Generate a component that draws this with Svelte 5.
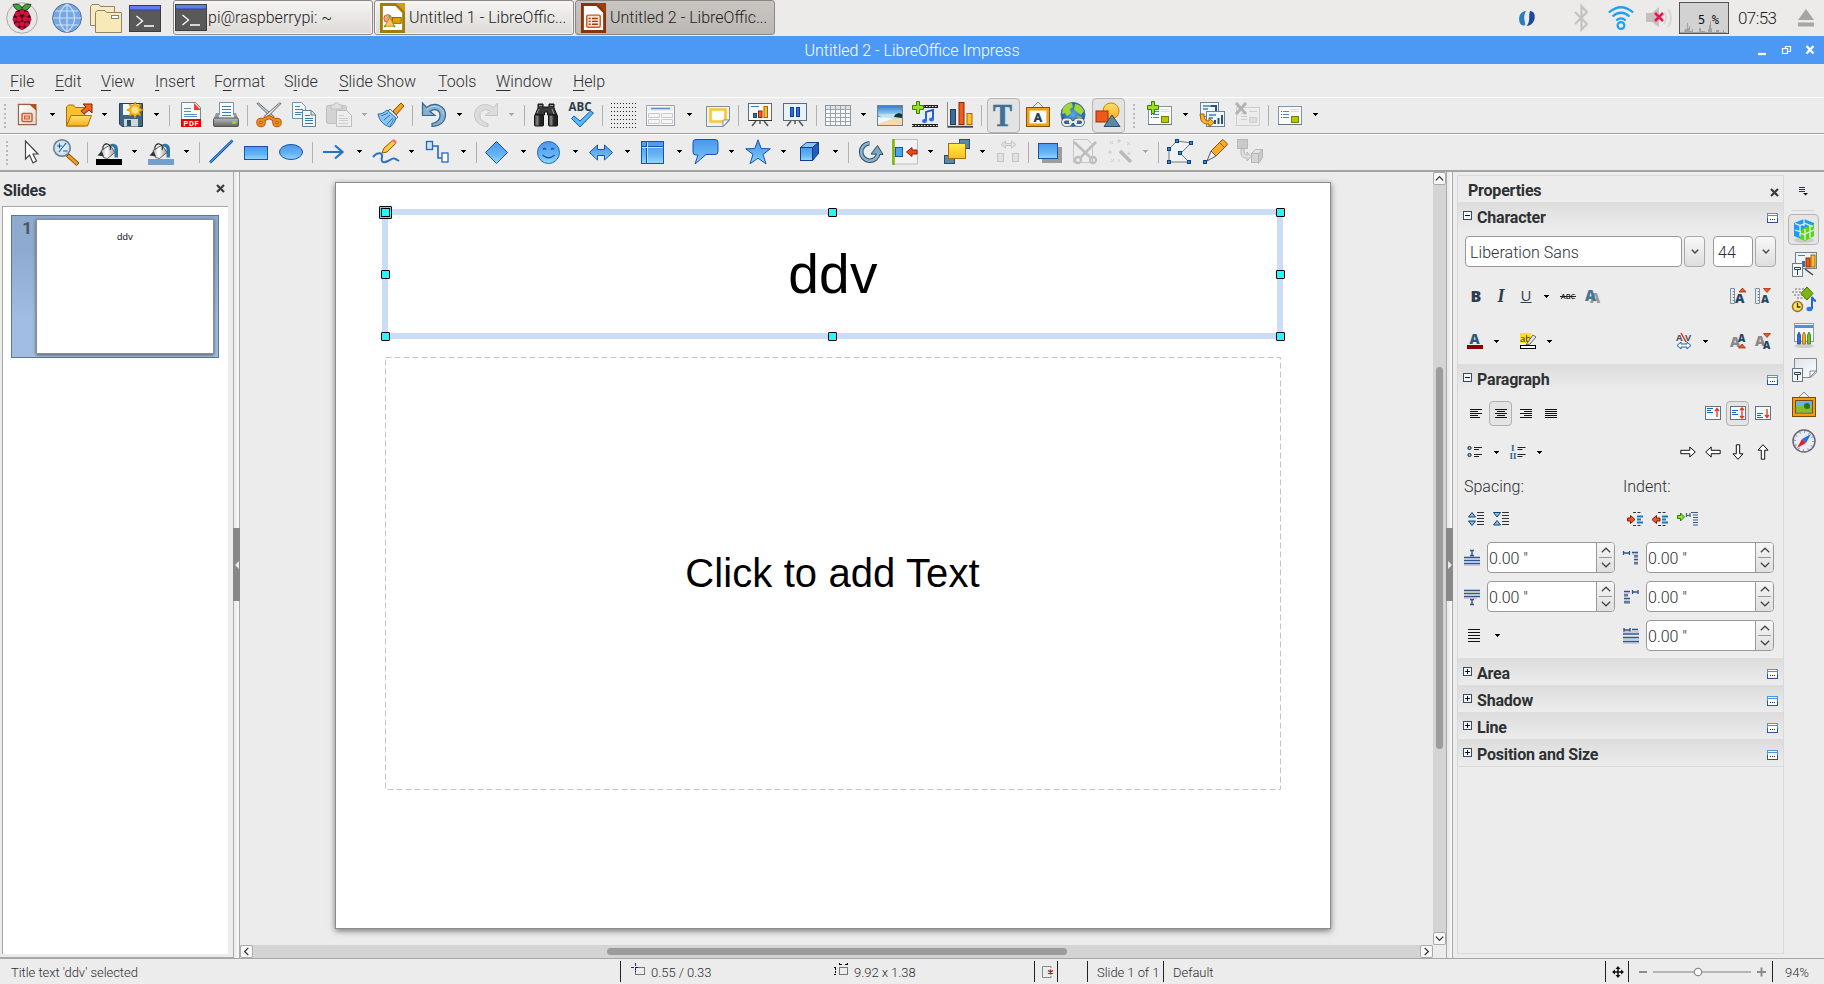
<script>
  const menus = [
    ['', 'F', 'ile', 45], ['', 'E', 'dit', 46], ['', 'V', 'iew', 54], ['', 'I', 'nsert', 59], ['F', 'o', 'rmat', 70],
    ['S', 'l', 'ide', 55], ['', 'S', 'lide Show', 99], ['', 'T', 'ools', 58], ['', 'W', 'indow', 77], ['', 'H', 'elp', 50]
  ];

  const star = 'M13 .8L16.2 9.6 25.3 9.8 18 15.4 21 24.8 13 19.2 5 24.8 8 15.4 .7 9.8 9.8 9.6Z';
  const dots = (() => {
    let s = '';
    for (let y = 0; y < 26; y += 4) for (let x = 1; x < 27; x += 3) s += `<rect x="${x - 1}" y="${y + 1}" width="1" height="1"/>`;
    return `<g fill="#222">${s}</g>`;
  })();
  const bucket = (c) => `<path d="M14 5.500c4-2 8 0 8 5v8h-3.500v-7c0-3-1-4-3-4z" fill="#2c76a8"/><path d="M5 11.500L14 6l5 7.500-7.500 6-4-1z" fill="url(#metal)" stroke="#555" stroke-width=".9"/><path d="M7 10.500c-1-4 2-6 4.500-5.500 3 .6 3.500 4 2.500 6" fill="none" stroke="#222" stroke-width="1.100"/><path d="M1.500 16.500l4-4.500 2.500 5.500-3-.5z" fill="#333"/><rect x="0" y="20" width="26" height="6" fill="${c}"/>`;
  const legs = '<path d="M9 19l-4 5M17 19l4 5M13 18v4" stroke="#555" stroke-width="1.500" fill="none"/>';
  const layoutPage = '<rect x="1.500" y="4.500" width="23" height="18" fill="#f8fafb" stroke="#8594a0"/><path d="M1 22.500h24" stroke="#667480"/><path d="M6 9.500h6M6 12.500h6M6 15.500h6" stroke="#4b88bd" stroke-width="1"/><path d="M4 9.500h1M4 12.500h1M4 15.500h1" stroke="#245c90"/><path d="M14 7.500h8M14 9.500h8" stroke="#d5dde3"/><rect x="14.500" y="14.500" width="7" height="6" fill="#b5c900" stroke="#718300"/>';
  const chartBars = '<rect x="6.500" y="11.500" width="3" height="4" fill="#3f6e93" stroke="#224763"/><rect x="11.500" y="9" width="3.500" height="6.500" fill="#f15b12" stroke="#932404"/><rect x="17" y="4.500" width="3.500" height="11" fill="#ffc02a" stroke="#a66300"/>';

  const ic = {
    impress: '<path d="M4.500 2.500h12l5.500 5v15h-17.500z" fill="#fff" stroke="#9b6247" stroke-width="1.300"/><path d="M5.500 3.500h11l5 5v13.500h-16z" fill="url(#docshade)"/><path d="M15 2h7.500v7z" fill="#b84d1e"/><rect x="8" y="11.500" width="10" height="8" rx="1" fill="#fbe3d5" stroke="#d3582a" stroke-width="1.500"/><rect x="10.500" y="14" width="5" height="3" fill="#f0b692" stroke="#d3582a"/>',
    open: '<path d="M.5 24V5l2-2h5l2 2.500h9V24z" fill="#fbc02d" stroke="#a96f06"/><path d="M.5 24L5 13.500h20.500L21.500 24z" fill="url(#gold)" stroke="#a96f06"/><path d="M15 9l5-4-3-3h9v9l-3-3-5 4z" fill="#f0641e" stroke="#7d2204"/>',
    save: '<path d="M1.500 1.500h23v23H4l-2.500-2.500z" fill="#3e6582" stroke="#233d52"/><rect x="5" y="2" width="16" height="11" fill="#f2f7fa"/><rect x="6" y="17" width="14" height="7.500" fill="#cdd8de"/><rect x="9" y="18" width="4" height="6" fill="#2c4c64"/><path d="M17 0l1.800 3.700 4-1.600-1.500 4 4 1.800-4 1.800 1.500 4-4-1.500L17 16l-1.800-3.800-4 1.500 1.500-4-4-1.800 4-1.800-1.500-4 4 1.600z" fill="#ffb81c" stroke="#d98500" stroke-width=".8"/><circle cx="17" cy="8" r="3.500" fill="#ffe680"/>',
    pdf: '<path d="M3.500.5h14l5 5v19h-19z" fill="#f4f8fa" stroke="#7a8a96"/><path d="M16 1l7 7h-7z" fill="#ff3b30"/><path d="M6 6.500h7M6 9.500h7M6 12.500h13M6 14.500h13" stroke="#5a90b8"/><rect x="3" y="17" width="20" height="8" fill="#e00"/><text x="13.300" y="23.700" font-size="7.500" font-weight="700" fill="#fff" text-anchor="middle" font-family="Roboto,sans-serif" letter-spacing=".6">PDF</text>',
    print: '<path d="M6.500 13V.5h14V13" fill="#f7fbfd" stroke="#7894a8"/><path d="M9 4.500h9M9 7.500h9M9 10.500h9M9 13.500h9" stroke="#447ea8"/><path d="M3 11h3v5h15v-5h2l2 5H1z" fill="#999"/><rect x=".5" y="16" width="25" height="8.500" rx="1.500" fill="url(#printer)" stroke="#555"/><ellipse cx="21" cy="20.500" rx="2" ry="1.200" fill="#8bef1b"/>',
    cut: '<path d="M1 1.500l15 15 2-2L2.500 1z" fill="#d4dae0" stroke="#59636b"/><path d="M25 1.500l-15 15-2-2L23.500 1z" fill="#e9edf0" stroke="#59636b"/><g fill="none" stroke="#a94c06" stroke-width="4"><circle cx="5" cy="20.500" r="2.800"/><circle cx="21" cy="20.500" r="2.800"/><path d="M7 18l6-3 6 3"/></g><g fill="none" stroke="#f58a1c" stroke-width="2.300"><circle cx="5" cy="20.500" r="2.800"/><circle cx="21" cy="20.500" r="2.800"/><path d="M7 18l6-3 6 3"/></g>',
    copy: '<path d="M1.500.5h9l4 4v12h-13z" fill="#f2f7fa" stroke="#78909f"/><path d="M4 4.500h5M4 7.500h8M4 10.500h8M4 12.500h6" stroke="#4583b0"/><path d="M11.500 8.500h9l4 4v12h-13z" fill="#f2f7fa" stroke="#667d8d"/><path d="M20 8.500v4.500h4.500" fill="#d3e0e8" stroke="#667d8d"/><path d="M14 13.500h5M14 16.500h8M14 18.500h8M14 21.500h8" stroke="#3b79a8"/>',
    paste: '<g stroke="#bdbdbd"><rect x=".5" y="3.500" width="20" height="18" rx="2" fill="#d3d3d3"/><path d="M5 7V3h3c0-3 5-3 5 0h3v4z" fill="#e0e0e0"/><path d="M10.500 8.500h10l5 5v11h-15z" fill="#ededed"/><path d="M13 13.500h5M13 16.500h9M13 18.500h9M13 21.500h9" stroke="#ccc"/></g>',
    brush: '<path d="M15 9l8-8 3 3-8 9z" fill="#f0a51e" stroke="#8a4b00"/><path d="M12 7l8 8-2 2-9-7z" fill="#e0e6ea" stroke="#5a6a75"/><path d="M9 8c-3 3-6 4-9 4 1 6 5 11 12 13 3-2 5-5 6-9z" fill="#8cc4f2" stroke="#2c69a6"/><path d="M3 14l7-3M6 18l6-5M9 22l6-6M12 24l4-7" stroke="#2f7cc4"/>',
    undo: '<path d="M1.500 1v12.500h12.500l-5-4c5-4 10-1 10 4 0 4-3 7-8 8v3c7 0 13-4 13.500-11C25 4 14-1 5.500 5.500z" fill="#86afcf" stroke="#34668f" stroke-width="1.200"/><path d="M5.500 7.500c7-6 16-3 17 5" stroke="#bcd6ea" fill="none"/>',
    redo: '<path transform="matrix(-1 0 0 1 26 0)" d="M1.500 1v12.500h12.500l-5-4c5-4 10-1 10 4 0 4-3 7-8 8v3c7 0 13-4 13.500-11C25 4 14-1 5.500 5.500z" fill="#dcdcdc" stroke="#c6c6c6"/>',
    find: '<path d="M5 2h5v3h6V2h5v4l3 7h-9.500v-3h-3v3H2l3-7z" fill="#3a3a3a" stroke="#111"/><rect x="1.500" y="13" width="9" height="11" rx="1" fill="url(#black)" stroke="#111"/><rect x="15.500" y="13" width="9" height="11" rx="1" fill="url(#black)" stroke="#111"/><path d="M6 3.500h3M17 3.500h3M4 11l2-4M19 7l2 5" stroke="#999"/>',
    abc: '<text x="12" y="8.500" font-family="Open Sans,sans-serif" font-weight="700" font-size="11.500" text-anchor="middle" fill="#2a3d4d">ABC</text><path d="M3.500 16.500L6 14l6 5L22.500 9l3 2L12 25z" fill="#55b8f8" stroke="#1a5ba8"/>',
    grid: dots,
    table: '<rect x=".5" y="3.500" width="25" height="20" fill="#f7f8fa" stroke="#8e979f"/><path d="M1 4h24v3H1z" fill="#dfe3e7"/><path d="M1 7.500h24M1 11.500h24M1 15.500h24M1 19.500h24M5.500 4v19M10.500 4v19M15.500 4v19M20.500 4v19" stroke="#9aa3ab"/>',
    frame: '<path d="M-1.500 3.500h28v20h-28z" fill="#fbfbfc" stroke="#9aa3ab"/><path d="M0 5h25v4H0z" fill="#e6ebf2"/><path d="M3 6.500h19" stroke="#5c8fc7" stroke-width="1.500"/><path d="M.5 11.500h11v4h-11zM13.500 11.500h11v4h-11zM.5 17.500h11v4h-11zM13.500 17.500h11v4h-11z" fill="#f5f5f5" stroke="#c9c9c9"/>',
    note: '<path d="M2.500 4.500h23v14l-6 6h-17z" fill="#eef1f3" stroke="#828e98"/><path d="M6.500 7.500h15v12h-15z" fill="#fff" stroke="#ffc62c" stroke-width="2.600"/><path d="M25 18h-6v6.500z" fill="#fff" stroke="#828e98"/>',
    show: '<rect x="1.500" y="1.500" width="23" height="17" fill="#f5f9fc" stroke="#5c6b77"/><path d="M2 18.500h23" stroke="#333"/><path d="M4 4.500h8" stroke="#3c82c8"/>' + chartBars + legs,
    pause: '<rect x="1.500" y="1.500" width="23" height="17" fill="#e8f2fa" stroke="#5c6b77"/><rect x="8.500" y="5.500" width="3" height="9" fill="#2a71dd" stroke="#123e94"/><rect x="14.500" y="5.500" width="3" height="9" fill="#2a71dd" stroke="#123e94"/>' + legs,
    image: '<rect x=".5" y="3.500" width="25" height="20" fill="#5ea9dd" stroke="#72838d"/><path d="M1 4h24v9H1z" fill="url(#sky)"/><path d="M1 13c8-2 14 0 24-1v5L9 18z" fill="#bfe2f0"/><path d="M1 17h24v6H1z" fill="#f5d9aa"/><path d="M1 15c7 1 13 0 14 2L1 22z" fill="#eef8fc"/><path d="M17 15c1-3 2-3 5-4l3 1v4z" fill="#17352d"/>',
    movie: '<path d="M4 5h22v18H4z" fill="#e8edf2"/><path d="M0 23.500h26M11 4.500h15" stroke="#222" stroke-width="3"/><path d="M0 23.500h26M11 4.500h15" stroke="#eee" stroke-width="1.200" stroke-dasharray="1.500 1.500"/><path d="M14 19V10l7-2v9" fill="none" stroke="#184fd0" stroke-width="1.800"/><ellipse cx="12.500" cy="19" rx="2.500" ry="2" fill="#2a6ff0"/><ellipse cx="19.500" cy="17.500" rx="2.500" ry="2" fill="#2a6ff0"/><path d="M4.500-.5h3v4h4v4h-4v4h-3v-4h-4v-4h4z" fill="#9be028" stroke="#3c7d00"/>',
    chart: '<path d="M.5 0v25.500h25.500" fill="none" stroke="#888"/><path d="M1 24.500h25" stroke="#444" stroke-width="1.300"/><rect x="3.500" y="7.500" width="5" height="15" fill="#3d6c90" stroke="#1e3f5a"/><rect x="12" y=".5" width="5" height="22" fill="#f25c16" stroke="#8a2606"/><rect x="20" y="11.500" width="5" height="11" fill="#ffc22c" stroke="#a66900"/>',
    text: '<text x="12.500" y="23.500" text-anchor="middle" font-family="Liberation Serif,serif" font-weight="700" font-size="31" textLength="19" lengthAdjust="spacingAndGlyphs" fill="#3e7196" stroke="#3e7196" stroke-width=".6">T</text>',
    fontwork: '<path d="M8 5l5-5 5 5" fill="none" stroke="#888"/><rect x="1.500" y="5.500" width="23" height="19" fill="#fff" stroke="#8a5200"/><rect x="3.300" y="7.300" width="19.400" height="15.400" fill="#fff" stroke="#f0a11c" stroke-width="2.600"/><text x="13" y="20" text-anchor="middle" font-family="Roboto,sans-serif" font-weight="900" font-size="13" fill="#1f3f5c">A</text>',
    globe: '<circle cx="13" cy="12.500" r="12" fill="url(#sea)" stroke="#4076a8"/><path d="M3 6c3-4 6-5 9-5l1 4-3 2 1 4-4 3-2-3-3 1zM15 2c4 0 7 3 9 7l-3 4-4-3-3-2zM17 14l5 1-3 4z" fill="#a3d632"/><g fill="none" stroke="#4b5660" stroke-width="3.600"><rect x="3" y="17.500" width="8" height="5.500" rx="2.700"/><rect x="15" y="17.500" width="8" height="5.500" rx="2.700"/><path d="M9 20h8"/></g><g fill="none" stroke="#e9eef2" stroke-width="1.900"><rect x="3" y="17.500" width="8" height="5.500" rx="2.700"/><rect x="15" y="17.500" width="8" height="5.500" rx="2.700"/><path d="M9 20h8"/></g>',
    shapes: '<circle cx="16" cy="9" r="8" fill="url(#gold)" stroke="#c98500"/><rect x="1" y="9" width="12" height="11" fill="#ec5a1c" stroke="#a32e04"/><path d="M17 13l8 11.500H9z" fill="#5b87a8" stroke="#2a4d69"/>',
    addslide: layoutPage + '<path d="M4.500-.5h3v4h4v4h-4v4h-3v-4h-4v-4h4z" fill="#9be028" stroke="#3c7d00"/>',
    dup: '<rect x="1.500" y=".5" width="18" height="14" fill="#f2f7fb" stroke="#6d8194"/><path d="M4 4h8M4 7h5" stroke="#3d83be" stroke-width="1.300"/><path d="M12 4h5v5" stroke="#27547c" stroke-width="2" fill="none"/><rect x="7.500" y="9.500" width="18" height="15" fill="#f2f7fb" stroke="#6d8194"/><path d="M10 13h7M10 16h4" stroke="#3d83be" stroke-width="1.300"/><path d="M16 22v-4M19.500 22v-6M23 22v-9" stroke="#27547c" stroke-width="2"/><path d="M1 12l1 6c2 4 5 4 8 4v3l5-4.500-5-4.500v3c-3 0-5-1-5-7z" fill="#ffb42a" stroke="#9b5a00"/>',
    del: '<g stroke="#cfcfcf"><rect x="2.500" y="5.500" width="23" height="18" fill="#ececec"/><path d="M7 11.500h6M7 14.500h6M7 17.500h6M15 9.500h8"/><rect x="15.500" y="15.500" width="7" height="5" fill="#ddd"/></g><path d="M2 1l10 11M12 1L2 12" stroke="#b3b3b3" stroke-width="3"/>',
    layout: layoutPage,
    pointer: '<path d="M7.500 2v18l4-4 3.500 8 3.500-2-3.500-7h5z" fill="#fff" stroke="#444" stroke-width="1.200"/>',
    zoom: '<path d="M16 15l10 9-2.500 2.500-10-9z" fill="#f19a1c" stroke="#7d4800"/><circle cx="9" cy="9" r="8.300" fill="url(#lens)" stroke="#717b84" stroke-width="1.500"/><path d="M4 7h5M6.500 4.500v5M10 12h4.500M6 13L13 4" stroke="#1d5d9b" stroke-width="1.200"/>',
    fill: bucket('#000'), linefill: bucket('#729fcf'),
    line: '<path d="M2 23.500L24.500 1.500" stroke="#104a9a" stroke-width="2.600"/><path d="M2 23.500L24.500 1.500" stroke="#3c8ee8" stroke-width="1.300"/>',
    rect: '<rect x="1.500" y="7.500" width="23" height="13" fill="url(#blue)" stroke="#1752ab"/>',
    ellipse: '<ellipse cx="13" cy="13" rx="11.500" ry="7.500" fill="url(#blue)" stroke="#1752ab"/>',
    arrow: '<path d="M2 13h18M14 6.500l7.500 6.500-7.500 6.500" fill="none" stroke="#2270cf" stroke-width="2.200"/>',
    curve: '<path d="M0 18c5-6 10-4 9 0s0 7 6 4 5-4 11 0" fill="none" stroke="#2b74c4" stroke-width="2"/><path d="M9 14l2-5 9-8 3 3-9 9z" fill="#ffca3a" stroke="#8d5b00"/><path d="M19 1.500l2-1.500 3 3-1.500 2z" fill="#ff6c7c"/>',
    connector: '<rect x="1.500" y="2.500" width="6" height="8" fill="#cfe4fb" stroke="#2468b8" stroke-width="1.300"/><path d="M8 7h5v12h4" fill="none" stroke="#2468b8" stroke-width="1.600"/><rect x="17" y="14" width="6" height="9" fill="#fff" stroke="#2468b8" stroke-width="1.300"/>',
    diamond: '<path d="M11.500 2.500L22.500 13.500 11.500 24.500.5 13.500z" fill="url(#blue)" stroke="#1752ab"/>',
    smile: '<circle cx="11.500" cy="13.500" r="11" fill="url(#blue)" stroke="#2466b8"/><path d="M6 10.500q1.500-2 3 0M14 10.500q1.500-2 3 0M5.500 16q6 5.500 12 0" stroke="#1752ab" stroke-width="1.300" fill="none"/>',
    dblarrow: '<path d="M.5 13.500l8-7.500v4.500h7V6l8 7.500-8 7.500v-4.500h-7V21z" fill="url(#blue)" stroke="#1752ab"/>',
    flow: '<rect x=".5" y="2.500" width="22" height="22" fill="url(#blue)" stroke="#1752ab"/><path d="M5.500 2v22M0 7.500h22" stroke="#1752ab"/><path d="M6.500 3v21M1 8.500h21" stroke="#bfe0fa"/>',
    callout: '<path d="M3 .5h19q3 0 3 3v9q0 3-3 3h-9L2 25l3-9H3q-3 0-3-3v-9.500q0-3 3-3z" fill="url(#blue)" stroke="#1752ab"/>',
    star: `<path d="${star}" fill="url(#blue)" stroke="#1752ab"/>`,
    cube: '<path d="M3.500 8.500l6-5h12l-6 5z" fill="#8cc6f8" stroke="#113f8c"/><path d="M15.500 8.500l6-5v11l-6 7z" fill="#1c5fc0" stroke="#113f8c"/><rect x="3.500" y="8.500" width="12" height="13" fill="url(#blue)" stroke="#113f8c"/>',
    rotate: '<path d="M12.500 4.300a8.700 8.700 0 1 0 9 9.700" fill="none" stroke="#274d6b" stroke-width="4.600"/><path d="M14 15l6.500-8.500 5.500 9z" fill="#7fa5c2" stroke="#274d6b"/><path d="M12.500 4.300a8.700 8.700 0 1 0 9 9.700" fill="none" stroke="#8fb2cc" stroke-width="2.600"/>',
    align: '<path d="M.5.500h25v24.500h-25z" fill="#f2f2f4" stroke="#b9bcc6"/><path d="M1.500 0v26" stroke="#7cb800" stroke-width="2.500"/><rect x="3.500" y="8.500" width="7" height="9" fill="#4aa5ee" stroke="#1857a2"/><path d="M14.500 13l5.500-4.500v2.500h5v4H20v2.500z" fill="#f04a1c" stroke="#8b1e00"/>',
    arrange: '<rect x="15.500" y=".5" width="10" height="9" fill="#5c88a8" stroke="#2b4b63"/><rect x=".5" y="16.500" width="10" height="8" fill="#5c88a8" stroke="#2b4b63"/><rect x="4.500" y="4.500" width="17" height="15" fill="url(#yellow)" stroke="#a86c00"/>',
    distribute: '<g fill="#e1e1e1" stroke="#c5c5c5"><path d="M6 5.500l4.500-3.500v2.500h6V2l4.500 3.500-4.500 3.500V6.500h-6V9z"/><rect x="2.500" y="14.500" width="6" height="8"/><rect x="17.500" y="14.500" width="6" height="8"/></g>',
    shadow: '<path d="M5 8h20v16H5z" fill="#9c9c9c"/><rect x="1.500" y="4.500" width="19" height="15" fill="url(#blue)" stroke="#1752ab"/>',
    crop: '<path d="M1.500.5h14l5 5v18h-19z" fill="#ededed" stroke="#c5c5c5"/><path d="M2 3l16 15M24 3L9 18" stroke="#bdbdbd" stroke-width="2.600"/><g fill="none" stroke="#bdbdbd" stroke-width="2.300"><circle cx="6" cy="21" r="3"/><circle cx="21" cy="21" r="3"/></g>',
    wand: '<path d="M13 12l11 11" stroke="#bababa" stroke-width="3.500"/><g stroke="#cbcbcb"><path d="M3 2l3 3M6 2L3 5M12 0v4M10 2h4M20 3l3 3M23 3l-3 3M3 11v4M1 13h4M22 13v3M20.500 14.500h3M4 20l3 3M7 20l-3 3M12 20v3"/></g>',
    points: '<path d="M2 23h20L13.500 14.500 24 4 10 2 2 10z" fill="#f0f3f5" stroke="#777"/><g fill="#2d8ae0" stroke="#0d3f7c"><rect x="8.500" y=".5" width="3" height="3"/><rect x="22.500" y="2.500" width="3" height="3"/><rect x=".5" y="8.500" width="3" height="3"/><rect x="11.500" y="12.500" width="3" height="3"/><rect x=".5" y="21.500" width="3" height="3"/><rect x="20.500" y="21.500" width="3" height="3"/></g>',
    glue: '<path d="M9 12L19 2l2-1.500L25.500 5 24 7 14 17z" fill="#f8ac28" stroke="#8b5200"/><path d="M9 12l5 5-9 5z" fill="#eceff2" stroke="#555"/><path d="M17 3l6 6" stroke="#8b5200"/><rect x="1.500" y="21.500" width="3" height="3" fill="#2d8ae0" stroke="#0d3f7c"/>',
    extrude: '<g fill="#cacaca" stroke="#b8b8b8"><rect x=".5" y=".5" width="10" height="9"/><path d="M4 10v5c1 4 4 4 6 4v3l4-4.500-4-4.500v3c-2 0-3-1-3-6z" fill="#e0e0e0"/><path d="M14.500 14.500l4-4h7l-4 4z" fill="#e2e2e2"/><path d="M21.500 14.500l4-4v8l-4 6z"/><rect x="14.500" y="14.500" width="7" height="9" fill="#d5d5d5"/></g>'
  };

  const bar1 = ['g10', 'impress', 'd', 'open', 'd', 'save', 'd', '|', 'pdf', 'print', '|', 'cut', 'copy', 'paste', 'x', 'brush', '|', 'undo', 'd', 'redo', 'x', '|', 'find', 'abc', '|', 'grid', 'frame', 'D', 'note', '|', 'show', 'pause', '|', 'table', 'd', 'image', 'movie', 'chart', '|', '*text', 'fontwork', 'globe', '*shapes', 'g17', 'addslide', 'd', 'dup', 'del', '|', 'layout', 'd'];
  const bar2 = ['g13', 'pointer', 'zoom', '|', 'fill', 'd', 'linefill', 'd', '|', 'line', 'rect', 'ellipse', '|', 'arrow', 'd', 'curve', 'd', 'connector', 'd', '|', 'diamond', 'd', 'smile', 'd', 'dblarrow', 'd', 'flow', 'd', 'callout', 'd', 'star', 'd', 'cube', 'd', '|', 'rotate', 'align', 'd', 'arrange', 'd', 'distribute', '|', 'shadow', 'crop', 'wand', 'x', '|', 'points', 'glue', 'extrude'];

  /* 16px sidebar glyphs */
  const A = (x, y, s, c) => `<text x="${x}" y="${y}" font-family="Open Sans,sans-serif" font-weight="800" font-size="${s}" fill="${c}">A</text>`;
  const up = (x, y) => `<path d="M${x} ${y + 4}l3.500-4 3.500 4z" fill="#f4571e" stroke="#8f2200" stroke-width=".7"/>`;
  const dn = (x, y) => `<path d="M${x} ${y}h7l-3.500 4z" fill="#f4571e" stroke="#8f2200" stroke-width=".7"/>`;
  const rule = '<path d="M.5.5h4v15h-4zM2.500 3.500h2M2.500 6.500h2M2.500 9.500h2M2.500 12.500h2" fill="#e6edf2" stroke="#71879a" stroke-width=".9"/>';
  const lines = (a) => '<path stroke="#111" stroke-width="1" d="' + a.map(([x, w], i) => `M${x} ${4.5 + i * 2}h${w}`).join('') + '"/>';
  const va = (t, arr) => `<rect x=".5" y="1.500" width="15" height="13" fill="#f7fafc" stroke="#5e7388"/>${t}<path d="${arr}" stroke="#e8330f" stroke-width="1.300" fill="none"/>`;
  const bl = (x, y, w) => `<path d="M${x} ${y}h${w}M${x} ${y + 2}h${w - 2}M${x} ${y + 4}h${w}" stroke="#1b66b4" stroke-width="1"/>`;
  const outArrow = '<path d="M.8 6.300h9V3l5.500 5-5.500 5V9.700h-9z" fill="#fff" stroke="#111"';
  const sg = {
    bold: '<text x="8" y="14" text-anchor="middle" font-family="Open Sans,sans-serif" font-weight="800" font-size="16" fill="#2b3e50">B</text>',
    italic: '<text x="8" y="14" text-anchor="middle" font-family="Liberation Serif,serif" font-style="italic" font-weight="700" font-size="18" fill="#2b3e50">I</text>',
    under: '<text x="8" y="12.500" text-anchor="middle" font-family="Open Sans,sans-serif" font-weight="500" font-size="15" fill="#2b3e50">U</text><path d="M2.500 14.500h11" stroke="#2b3e50"/>',
    strike: '<text x="8" y="11" text-anchor="middle" font-family="Open Sans,sans-serif" font-weight="600" font-size="7.500" fill="#222">ABC</text><path d="M0 8.500h16" stroke="#222"/>',
    shade: A(5, 15, 14, '#9a9a9a') + A(0, 13, 15, '#457499'),
    grow: rule + A(5, 15, 13, '#27465f') + up(9, 0), shrink: rule + A(6, 15, 11, '#27465f') + dn(8.5, 0.5),
    color: A(2.5, 10.5, 14, '#2f5878') + '<rect y="12" width="16" height="4" fill="#8b0000"/>',
    mark: '<rect width="11" height="10" fill="#ffe11b"/><text x="0" y="8.500" font-family="Open Sans,sans-serif" font-weight="500" font-size="9.500" fill="#222">ab</text><path d="M8 9l5-7 3 2-6 7-4 1z" fill="#e3e7e9" stroke="#444" stroke-width=".8"/><rect x=".5" y="12.500" width="15" height="3" fill="#fff" stroke="#000"/>',
    kern: '<text x="0" y="8" font-family="Open Sans,sans-serif" font-weight="700" font-size="9.500" fill="#555">A</text><text x="9" y="8" font-family="Open Sans,sans-serif" font-weight="700" font-size="9.500" fill="#555">V</text><path d="M5 0l5 9" stroke="#e22" stroke-width="1.500"/><path d="M1 12.500l4-3.500v2h6V9l4 3.500-4 3.500v-2H5v2z" fill="#fff" stroke="#1b66b4"/>',
    sup: A(0, 14, 14, '#888') + A(8, 8.500, 10, '#27465f') + up(8.500, 11), sub: A(0, 13, 14, '#888') + A(8, 15.500, 10, '#27465f') + dn(8.500, .5),
    left: lines([[2, 12], [2, 8], [2, 12], [2, 8], [2, 10]]), center: lines([[2, 12], [4, 8], [2, 12], [4, 8], [2, 12]]),
    right: lines([[2, 12], [6, 8], [2, 12], [6, 8], [2, 12]]), just: lines([[2, 12], [2, 12], [2, 12], [2, 12], [2, 12]]),
    vtop: va(bl(2, 3.5, 6), 'M12 12V4M10 6l2-2.500 2 2.500'), vmid: va(bl(2, 5.5, 6), 'M12 13V3M10 5l2-2 2 2M10 11l2 2 2-2'), vbot: va(bl(2, 8.5, 6), 'M12 4v8M10 10l2 2.500 2-2.500'),
    bullets: '<circle cx="2.500" cy="4" r="1.600" fill="#8cc8ee" stroke="#123"/><circle cx="2.500" cy="11" r="1.600" fill="#8cc8ee" stroke="#123"/><path d="M7 3.500h8M7 5.500h5M7 10.500h8M7 12.500h5" stroke="#222"/>',
    nums: '<text x="1" y="7" font-family="Liberation Serif,serif" font-size="9" font-weight="700" fill="#2c628c">I</text><text x="-.5" y="15" font-family="Liberation Serif,serif" font-size="9" font-weight="700" fill="#2c628c">II</text><path d="M7.500 3.500h8M7.500 5.500h5M7.500 10.500h8M7.500 12.500h5" stroke="#222"/>',
    ar: outArrow + '/>', al: outArrow + ' transform="rotate(180 8 8)"/>', ad: outArrow + ' transform="rotate(90 8 8)"/>', au: outArrow + ' transform="rotate(-90 8 8)"/>',
    spup: '<path d="M.5 6L4 1.500 7.500 6zM.5 10h7L4 14.500z" fill="#7cc4f2" stroke="#153e70"/><path d="M9 1.500h7M9 4.500h7M9 7.500h7M9 10.500h7M9 13.500h7" stroke="#333" stroke-width="1.200"/>',
    spdn: '<path d="M.5 1.500h7L4 6zM.5 14L4 9.500 7.500 14z" fill="#7cc4f2" stroke="#153e70"/><path d="M9 1.500h7M9 4.500h7M9 7.500h7M9 10.500h7M9 13.500h7" stroke="#333" stroke-width="1.200"/>',
    inr: '<path d="M6 1.500h8M6 14.500h8" stroke="#333" stroke-dasharray="3 1.500"/><path d="M10 5.500h6M10 8.500h4M10 11.500h6" stroke="#1478c8" stroke-width="1.800"/><path d="M.5 7h3V4.500l4.500 4-4.500 4V10h-3z" fill="#f0562a" stroke="#7c1c00"/>',
    inl: '<path d="M6 1.500h8M6 14.500h8" stroke="#333" stroke-dasharray="3 1.500"/><path d="M10 5.500h6M10 8.500h4M10 11.500h6" stroke="#1478c8" stroke-width="1.800"/><path d="M8 7H4.500V4.500l-4.500 4 4.500 4V10H8z" fill="#f0562a" stroke="#7c1c00"/>',
    hang: '<path d="M.5 4.500h3V2l4 4-4 4V7.500h-3z" fill="#8ee03a" stroke="#2f7d00"/><path d="M9.500 2v4M9.500 4.500h3M13 2v4M14 1.500h7M16 4h5M16 6.500h5M16 9h5M16 11.500h5M16 14h5" stroke="#355a8c" stroke-width="1.200"/>',
    above: '<path d="M8 0v6M6 .5h4M6 5.500h4M0 7.500h16M0 10.500h16M0 13.500h16" stroke="#2d5590" stroke-width="1.400"/><path d="M0 15h16" stroke="#aab"/>',
    below: '<path d="M8 10v6M6 10.500h4M6 15.500h4M0 1.500h16M0 4.500h16M0 7.500h16" stroke="#2d5590" stroke-width="1.400"/><path d="M0 9h13" stroke="#aab"/>',
    before: '<path d="M.5 1v4M.5 3h6M6.500 1v4M9 2.500h6M11 6h4M11 9.500h4M11 13h4" stroke="#2d5590" stroke-width="1.300"/><path d="M9 4h6M11 7.500h4M11 11h4M11 14.500h4" stroke="#aab"/>',
    after: '<path d="M9.500 1v4M9.500 3h5M15 1v4M1 2.500h6M1 6h4M1 9.500h6M1 13h6" stroke="#2d5590" stroke-width="1.300"/><path d="M1 4h6M1 7.500h4M1 11h6M1 14.500h6" stroke="#aab"/>',
    first: '<path d="M1 0v4M1 2h6M7 0v4M9 1.500h6M0 6h16M0 9.500h16M0 13.500h16" stroke="#2d5590" stroke-width="1.400"/><path d="M0 4h16M0 11h16M0 15h16" stroke="#aab"/>',
    lsp: '<path d="M2 1.500h12M2 4.500h12M2 7.500h12M2 10.500h12M2 13.500h12" stroke="#111" stroke-width="1"/>'
  };

  const tabs = {
    cubes: '<ellipse cx="13" cy="23" rx="10" ry="3" fill="#ccc"/><path d="M3 6l10-4 10 4v13l-10 4-10-4z" fill="#1e9cf0"/><path d="M13 11l10-4v12l-9 5-5-2v-8z" fill="#5cd413"/><path d="M4 6.500l5 2v11M13 2v7M4 13l6 2M9 8.500l5-2 8 3M14 12v11M14 17l9-4M19 9v12M9 16l5 2" stroke="#eef7fd" stroke-width="1.200" fill="none"/>',
    master: '<rect x="4.500" y=".5" width="21" height="16" fill="#edf4fa" stroke="#71808e"/><path d="M7 3.500h7" stroke="#3d82c7"/><rect x="11" y="9" width="3" height="6" fill="#336e96"/><rect x="15" y="6" width="4" height="9" fill="#f0561c" stroke="#922602"/><rect x="20" y="3" width="4" height="12" fill="#ffc12b" stroke="#9e6200"/><path d="M14 17l8 6" stroke="#444" stroke-width="1.500"/><rect x="1.500" y="11.500" width="10" height="13" fill="#f2f5f7" stroke="#6d7b88"/><path d="M3.500 15.500h6v2h-6zM6.500 18v5" fill="#fff" stroke="#2c4154" stroke-width="1"/>',
    anim: '<g stroke="#aaa" stroke-width="2" stroke-dasharray="2 1.500"><path d="M4 2h12M1 5h14M3 8h14M6 11h8"/></g><path d="M16 0l6 6.500-6 6.500-6-6.500z" fill="#7eb512" stroke="#467600"/><circle cx="6.500" cy="19.500" r="5" fill="#ffe35b" stroke="#99712a" stroke-width="1.500"/><path d="M6.500 16v4h3" stroke="#333" fill="none" stroke-width="1.300"/><path d="M21 22V10q2 4 4 4" fill="none" stroke="#2266d0" stroke-width="2"/><ellipse cx="18.500" cy="22" rx="3" ry="2.200" fill="#2a79e8"/>',
    trans: '<ellipse cx="13" cy="24" rx="10" ry="2" fill="#ccc"/><rect x="3.500" y="1.500" width="19" height="18" fill="#f4f8fb" stroke="#8e9aa5"/><path d="M4 4.500h18" stroke="#4d8fd8" stroke-width="3"/><path d="M6.500 22V13l1.500-3 1.500 3v9z" fill="#2a6ce0" stroke="#12397c" stroke-width=".7"/><path d="M11.500 22V13l1.500-3 1.500 3v9z" fill="#ffa51e" stroke="#9a5800" stroke-width=".7"/><path d="M16.500 22V13l1.500-3 1.500 3v9z" fill="#69c41c" stroke="#2d6d00" stroke-width=".7"/>',
    page: '<path d="M3.500 1.500h22v14l-6 5h-16z" fill="url(#docgray)" stroke="#828d98"/><path d="M25 14h-6v6z" fill="#fff" stroke="#828d98"/><rect x="1.500" y="11.500" width="10" height="13" fill="#f2f5f7" stroke="#6d7b88"/><path d="M3.500 15.500h6v2h-6zM6.500 18v5" fill="#fff" stroke="#2c4154" stroke-width="1"/>',
    gallery: '<path d="M8 5l5-5 5 5" fill="none" stroke="#888"/><rect x="1.500" y="5.500" width="23" height="19" fill="#ee9d16" stroke="#7d4a00"/><rect x="4.500" y="8.500" width="17" height="12.500" fill="#6db2ec" stroke="#7d4a00"/><path d="M5 15q8-3 16 1v4.500H5z" fill="#8dbb22"/><circle cx="16" cy="14" r="3" fill="#2f7415"/>',
    nav: '<circle cx="13" cy="13" r="11" fill="#e7eef6" stroke="#667" stroke-width="1.500"/><circle cx="13" cy="13" r="9" fill="none" stroke="#999" stroke-width="2" stroke-dasharray="1 3.700"/><path d="M20 6l-5 9-4-4z" fill="#2371e6"/><path d="M6 20l5-9 4 4z" fill="#e81f25"/>'
  };
  const folded = ['Area', 'Shadow', 'Line', 'Position and Size'];
</script>

{#snippet dd(cls = '')}<svg class="dd {cls}" viewBox="0 0 5 3"><path d="M0 0h5v1H4v1H3v1H2V2H1V1H0z" /></svg>{/snippet}

{#snippet bar(list)}
  <div class="toolbar">
    {#each list as n}
      {#if n[0] === 'g' && n !== 'grid' && n !== 'globe' && n !== 'glue'}<span class="grip" style="width:{n === 'g10' ? 9.5 : n === 'g13' ? 13.5 : 17}px"><i></i></span>
      {:else if n === '|'}<span class="vsep"></span>
      {:else if n === 'd' || n === 'x' || n === 'D'}<span class="drop" class:wide={n === 'D'}>{@render dd(n === 'x' ? 'dim' : '')}</span>
      {:else}<span class="tool {n}" class:pressed={n[0] === '*'}><svg class="i26" viewBox="0 0 26 26">{@html ic[n.replace('*', '')]}</svg></span>{/if}
    {/each}
  </div>
{/snippet}

{#snippet g(name, on = false)}<span class="sg {name}" class:on><svg viewBox="0 0 16 16">{@html sg[name]}</svg></span>{/snippet}

{#snippet more()}<svg class="more" viewBox="0 0 11 10"><rect x=".5" y=".5" width="10" height="9" fill="#fff" stroke="#2f548e" /><path d="M0 .5h11M0 2.500h11M.5 0v5M10.500 0v5" stroke="#4f92df" /><path d="M3 6.500h1M5 6.500h1M7 6.500h1" stroke="#223" /></svg>{/snippet}

{#snippet box(plus)}<svg class="box" viewBox="0 0 9 9"><rect x=".5" y=".5" width="8" height="8" fill="#f4f8fc" stroke="#3d4b5c" /><path d={plus ? 'M2 4.500h5M4.500 2v5' : 'M2 4.500h5'} stroke="#111" /></svg>{/snippet}

{#snippet spin()}<div class="spin"><span>0.00 "</span><div class="ud"><i><svg viewBox="0 0 10 6"><path d="M.8 5.300L5 1.200l4.200 4.100" /></svg></i><i><svg viewBox="0 0 10 6"><path d="M.8.8L5 4.800 9.200.8" /></svg></i></div></div>{/snippet}

{#snippet term()}<svg class="term" viewBox="0 0 32 27"><rect x=".5" y=".5" width="31" height="26" fill="#595959" stroke="#3e3e3e" /><path d="M1 1h30v4H1z" fill="#5f7cf0" /><path d="M1 5h30" stroke="#33449a" /><path d="M7.500 11l6 5-6 5M15 21h10" stroke="#fff" stroke-width="1.300" fill="none" /></svg>{/snippet}

<svg class="defs" width="0" height="0">
  <defs>
    <linearGradient id="blue" x2="0" y2="1"><stop stop-color="#4a98ec" /><stop offset=".6" stop-color="#66b4f4" /><stop offset="1" stop-color="#8fdafc" /></linearGradient>
    <linearGradient id="gold" x2="0" y2="1"><stop stop-color="#ffe06c" /><stop offset="1" stop-color="#f9ae1c" /></linearGradient>
    <linearGradient id="yellow" x2="0" y2="1"><stop stop-color="#fff04a" /><stop offset=".6" stop-color="#ffd030" /><stop offset="1" stop-color="#ffc020" /></linearGradient>
    <linearGradient id="metal" x2="1" y2="0"><stop stop-color="#aaa" /><stop offset=".4" stop-color="#fff" /><stop offset="1" stop-color="#999" /></linearGradient>
    <linearGradient id="docshade" x2="1" y2="1"><stop stop-color="#fff" /><stop offset="1" stop-color="#ddd8d5" /></linearGradient>
    <linearGradient id="docgray" x2="1" y2="1"><stop stop-color="#dce3e9" /><stop offset="1" stop-color="#fff" /></linearGradient>
    <linearGradient id="printer" x2="0" y2="1"><stop stop-color="#bbb" /><stop offset="1" stop-color="#666" /></linearGradient>
    <linearGradient id="black" x2="1" y2="0"><stop stop-color="#333" /><stop offset=".3" stop-color="#888" /><stop offset=".6" stop-color="#222" /></linearGradient>
    <linearGradient id="sky" x2="0" y2="1"><stop stop-color="#3180cc" /><stop offset="1" stop-color="#9cd3f0" /></linearGradient>
    <radialGradient id="sea"><stop stop-color="#59a8e8" /><stop offset="1" stop-color="#1f5ea4" /></radialGradient>
    <radialGradient id="lens"><stop stop-color="#f6fbff" /><stop offset="1" stop-color="#b9d8f0" /></radialGradient>
  </defs>
</svg>

<div class="screen">
  <header class="taskbar">
    <svg class="rasp" viewBox="0 0 32 32"><circle cx="16" cy="16" r="15.300" fill="#e6e6e8" stroke="#aaa" /><path d="M16 9C10 9 8 5 7 2.500c4-1 8 0 9 4 1-4 5-5 9-4C24 5 22 9 16 9z" fill="#46a33c" stroke="#173c12" /><path d="M16 7l6 2 3 6-1 7-4 4-4 2-4-2-4-4-1-7 3-6z" fill="#4a0718" /><g fill="#d3123f"><circle cx="16" cy="10" r="2.500" /><circle cx="11.500" cy="12" r="2.500" /><circle cx="20.500" cy="12" r="2.500" /><circle cx="8.500" cy="17.500" r="2" /><circle cx="23.500" cy="17.500" r="2" /><circle cx="13" cy="17" r="2.700" /><circle cx="19.200" cy="17" r="2.700" /><circle cx="16" cy="22" r="2.600" /><circle cx="11" cy="22.500" r="2.200" /><circle cx="21" cy="22.500" r="2.200" /><circle cx="16" cy="26.500" r="1.800" /></g></svg>
    <svg class="web" viewBox="0 0 30 30"><circle cx="15" cy="15" r="14.400" fill="#75a7e2" stroke="#4e6f9c" /><path d="M15 1v28M1 15h28M3.500 8h23M3.500 22h23M15 1C5 8 5 22 15 29M15 1c10 7 10 21 0 28" fill="none" stroke="#d3e3f7" stroke-width="1.100" /></svg>
    <svg class="files" viewBox="0 0 32 29"><path d="M.5 21.500v-19l1.500-2h7l1.500 2h14v19z" fill="#f7ebbf" stroke="#928466" /><path d="M5.500 28.500V8.500l1.500-2h8l1.500 2h15v20z" fill="#f7e9b8" stroke="#928466" /><rect x="21.500" y="11.500" width="7" height="3" fill="#fff" stroke="#86866e" /></svg>
    {@render term()}
    <div class="task first">{@render term()}<span>pi@raspberrypi: ~</span></div>
    <div class="task"><svg class="doc" viewBox="0 0 28 33"><path d="M2.500 2.500h15l8 8v20h-23z" fill="#fff" stroke="#a17c06" stroke-width="3" /><path d="M18 1h9v9z" fill="#cf9d10" /><circle cx="9" cy="17" r="4" fill="#f7a389" stroke="#d05a30" /><rect x="14" y="16" width="9" height="6" fill="#e0a400" stroke="#8a6400" /><path d="M11 16l5 9H6z" fill="#ffc96b" stroke="#c98700" /><path d="M5 24h2v2H5zM15 24h2v2h-2zM10 14h2v2h-2z" fill="#3bbf30" /></svg><span>Untitled 1 - LibreOffic...</span></div>
    <div class="task active"><svg class="doc" viewBox="0 0 28 33"><path d="M2.500 2.500h15l8 8v20h-23z" fill="#fff" stroke="#8a3308" stroke-width="3" /><path d="M18 1h9v9z" fill="#a33e03" /><rect x="7" y="13.500" width="14" height="12.500" rx="1.500" fill="#fbe3d5" stroke="#c85a2c" stroke-width="1.500" /><path d="M9 17h2M12.500 17h6M9 20h2M12.500 20h6M9 23h2M12.500 23h6" stroke="#97400e" stroke-width="1.500" /></svg><span>Untitled 2 - LibreOffic...</span></div>
    <div class="tray">
      <svg class="swirl" viewBox="0 0 16 16"><path d="M7 1C2 1-1 6 .5 12c1.500 4 4 4 5.500 3 1-3-3-7 1-14z" fill="#2d7dbb" /><path d="M11 1c4 0 5.500 4 4.500 8s-4 7-8 7C12 11 9 6 11 1z" fill="#1e4a9c" /></svg>
      <svg class="bt" viewBox="0 0 16 28"><path d="M1 8l12 12-5.500 5.500V2L13 8 1 20" fill="none" stroke="#c5c3c1" stroke-width="2.200" /></svg>
      <svg class="wifi" viewBox="0 0 26 24"><g fill="none" stroke="#1e9ff5" stroke-width="2.200"><path d="M.8 6.500q12.200-10.500 24.400 0M4.500 10.500q8.500-7.500 17 0M8.300 14.500q4.700-4.300 9.400 0" /><circle cx="13" cy="19.500" r="3.400" /></g></svg>
      <svg class="vol" viewBox="0 0 27 22"><path d="M0 6h6l7-6v20l-7-5H0z" fill="#c3c1bf" /><path d="M18 5q4 6 0 12M22 2q6 9 0 18" stroke="#dad8d6" fill="none" stroke-width="2" /><path d="M9 6l8 8M17 6l-8 8" stroke="#f0134f" stroke-width="2.500" /></svg>
      <div class="cpu"><svg viewBox="0 0 48 12"><path d="M0 11h4l1-3h2V2h1v5h1V5h1v5h2v-2h1v3h6V7h2v3h4v1h3V8h1V4h1v-4h1v7h1v4h4v-2h3v2h4V9h1v2h2v1H0z" fill="#a3a3a3" /></svg><span>5 %</span></div>
      <span class="clock">07:53</span>
      <svg class="eject" viewBox="0 0 16 18"><path d="M8 0l8 11H0zM0 13.500h16v4H0z" fill="#a6a5a4" /></svg>
    </div>
  </header>

  <div class="titlebar"><span>Untitled 2 - LibreOffice Impress</span>
    <svg viewBox="0 0 58 12"><path d="M0 10h8" stroke="#fff" stroke-width="2.200" /><path d="M27.500 4V2.500h5v5H30M24.500 4.500h5v5h-5z" fill="none" stroke="#fff" stroke-width="1.200" /><path d="M48.500 2l7 7.500M55.500 2l-7 7.500" stroke="#fff" stroke-width="2.300" /></svg>
  </div>

  <nav class="menubar">{#each menus as [a, u, b, w]}<span style="width:{w}px">{a}<u>{u}</u>{b}</span>{/each}</nav>

  {@render bar(bar1)}
  {@render bar(bar2)}

  <main>
    <aside class="slides">
      <div class="phead"><b>Slides</b><svg viewBox="0 0 9 9"><path d="M1 1l7 7M8 1L1 8" /></svg></div>
      <div class="list"><div class="sel"><b>1</b><div class="thumb"><span>ddv</span></div></div></div>
    </aside>
    <div class="split"><div><svg viewBox="0 0 4 8"><path d="M4 0v8L0 4z" /></svg></div></div>

    <div class="work">
      <div class="canvas">
        <div class="slide">
          <div class="title"><span>ddv</span>
            <i class="h big" style="left:0;top:0"></i><i class="h" style="left:50%;top:0"></i><i class="h" style="left:100%;top:0"></i>
            <i class="h" style="left:0;top:50%"></i><i class="h" style="left:100%;top:50%"></i>
            <i class="h" style="left:0;top:100%"></i><i class="h" style="left:50%;top:100%"></i><i class="h" style="left:100%;top:100%"></i>
          </div>
          <div class="outline"><svg><rect x=".5" y=".5" width="895" height="432" fill="none" stroke="#c4c4c4" stroke-dasharray="6 3" /></svg><span>Click to add Text</span></div>
        </div>
      </div>
      <div class="vscroll"><svg class="sb" viewBox="0 0 12 12"><path d="M2 8l4-4 4 4" /></svg><div class="track"><i></i></div><svg class="sb" viewBox="0 0 12 12"><path d="M2 4l4 4 4-4" /></svg></div>
      <div class="hscroll"><svg class="sb" viewBox="0 0 12 12"><path d="M8 2L4 6l4 4" /></svg><div class="track"><i></i></div><svg class="sb" viewBox="0 0 12 12"><path d="M4 2l4 4-4 4" /></svg></div>
      <div></div>
    </div>

    <div class="split right"><div><svg viewBox="0 0 4 8"><path d="M0 0v8l4-4z" /></svg></div></div>

    <aside class="props">
      <div class="ptitle"><b>Properties</b><svg viewBox="0 0 9 9"><path d="M1 1l7 7M8 1L1 8" /></svg></div>
      <div class="sec">{@render box(false)}<b>Character</b>{@render more()}</div>
      <div class="fonts"><div class="field name">Liberation Sans</div><div class="cb"><svg viewBox="0 0 8 5"><path d="M.8.8L4 4 7.200.8" /></svg></div><div class="field size">44</div><div class="cb"><svg viewBox="0 0 8 5"><path d="M.8.8L4 4 7.200.8" /></svg></div></div>
      <div class="row r1">{@render g('bold')}{@render g('italic')}{@render g('under')}<span class="pd">{@render dd()}</span>{@render g('strike')}{@render g('shade')}<span class="sp"></span>{@render g('grow')}{@render g('shrink')}</div>
      <div class="row r2">{@render g('color')}<span class="pd b">{@render dd()}</span><span class="gap-mark"></span>{@render g('mark')}<span class="pd b">{@render dd()}</span><span class="sp"></span>{@render g('kern')}<span class="pd b">{@render dd()}</span><span class="gap-kern"></span>{@render g('sup')}{@render g('sub')}</div>
      <div class="sec">{@render box(false)}<b>Paragraph</b>{@render more()}</div>
      <div class="row r3">{@render g('left')}{@render g('center', true)}{@render g('right')}{@render g('just')}<span class="sp"></span>{@render g('vtop')}{@render g('vmid', true)}{@render g('vbot')}</div>
      <div class="row r4">{@render g('bullets')}<span class="pd b">{@render dd()}</span>{@render g('nums')}<span class="pd b">{@render dd()}</span><span class="sp"></span>{@render g('ar')}{@render g('al')}{@render g('ad')}{@render g('au')}</div>
      <div class="cols lab"><span>Spacing:</span><span>Indent:</span></div>
      <div class="cols ric"><span>{@render g('spup')}{@render g('spdn')}</span><span>{@render g('inr')}{@render g('inl')}{@render g('hang')}</span></div>
      <div class="cols fld"><span>{@render g('above')}{@render spin()}</span><span>{@render g('before')}{@render spin()}</span></div>
      <div class="cols fld"><span>{@render g('below')}{@render spin()}</span><span>{@render g('after')}{@render spin()}</span></div>
      <div class="cols fld last"><span class="ls">{@render g('lsp')}{@render dd()}</span><span>{@render g('first')}{@render spin()}</span></div>
      {#each folded as f}<div class="sec">{@render box(true)}<b>{f}</b>{@render more()}</div>{/each}
      <div class="rest"></div>
    </aside>

    <div class="tabs">
      <svg class="tmenu" viewBox="0 0 10 9"><path d="M0 .5h6M0 2.500h6M0 4.500h6" stroke="#334" /><path d="M4 6h5L6.500 8.500z" fill="#112" /></svg>
      <hr />
      {#each Object.entries(tabs) as [k, v]}<span class="tab" class:current={k === 'cubes'}><svg class="i26" viewBox="0 0 26 26">{@html v}</svg></span>{/each}
    </div>
  </main>

  <footer>
    <div class="s1">Title text 'ddv' selected</div>
    <div class="s2"><svg viewBox="0 0 14 13"><path d="M0 5.500h8M4.500 1v9" stroke="#22a" stroke-dasharray="3 1" /><path d="M5.500 5.500h8v7h-9v-5" fill="none" stroke="#000" stroke-dasharray="1 1" /></svg><span class="pos">0.55 / 0.33</span><svg viewBox="0 0 14 13"><path d="M5.500 1v3M13.500 1v3M6 2.500h2M11 2.500h2M0 5.500h3M1.500 6v6M0 12.500h3" stroke="#000" stroke-dasharray="2 1" /><path d="M5.500 5.500h8v7h-8z" fill="none" stroke="#000" stroke-dasharray="1 1" /></svg><span>9.92 x 1.38</span></div>
    <div class="s3"><svg viewBox="0 0 12 12"><path d="M9 2V.5H.5v11H9V10" fill="none" stroke="#888" /><path d="M8.500 3.500v5M6 4.500l5 3M11 4.500l-5 3" stroke="#b3121c" stroke-width="1.200" /></svg></div>
    <div class="s4"></div>
    <div class="s5">Slide 1 of 1</div>
    <div class="s6">Default</div>
    <div class="s7"><svg viewBox="0 0 12 12"><path d="M6 1v10M1 6h10" stroke="#111" stroke-width="1.500" /><path d="M6 0l2.500 3h-5zM6 12l2.500-3h-5zM0 6l3-2.500v5zM12 6L9 3.500v5z" fill="#111" /></svg></div>
    <div class="s8"><svg viewBox="0 0 126 12"><path d="M0 6h8M118 6h9M122.500 1.500v9" stroke="#8b8b8b" stroke-width="2" /><path d="M14 6h98" stroke="#a5a5a5" stroke-width="1.600" /><circle cx="59" cy="6" r="3.700" fill="#fff" stroke="#8b8b8b" stroke-width="1.200" /></svg></div>
    <div class="s9">94%</div>
  </footer>
</div>

<style>
  :global(body) { margin: 0; overflow: hidden; }
  .defs { position: absolute; }
  .screen { width: 1824px; height: 984px; display: flex; flex-direction: column; background: #ececec; font: 300 16px/20px Roboto, sans-serif; color: #2c2f33; overflow: hidden; }
  svg { display: block; flex: none; overflow: visible; }
  .screen * { box-sizing: border-box; }

  .taskbar { height: 36px; flex: none; display: flex; align-items: center; background: #edebe9; padding-left: 6px; color: #1c1c1c; }
  .rasp { width: 32px; height: 32px; }
  .web { width: 30px; height: 30px; margin-left: 14px; }
  .files { width: 32px; height: 29px; margin-left: 8px; }
  .term { width: 32px; height: 27px; margin-left: 7px; }
  .task { width: 200px; height: 35px; margin-left: 1px; margin-bottom: 1px; border: 1px solid #8b8784; border-radius: 3px; background: linear-gradient(#f6f5f4, #dddad7); display: flex; align-items: center; white-space: nowrap; box-shadow: inset 0 0 0 1px #f8f7f6; }
  .task span { padding-top: 1px; }
  .task.first { margin-left: 12px; }
  .task .term { margin: 0 1px; }
  .task .doc { width: 27px; height: 32px; margin: 0 3px 0 4px; }
  .task.active { background: linear-gradient(#c9c6c2, #bcb8b4); box-shadow: none; }
  .tray { flex: 1; display: flex; align-items: center; padding-right: 10px; justify-content: flex-end; }
  .swirl { width: 16px; height: 16px; margin-right: 39px; }
  .bt { width: 16px; height: 28px; margin-right: 18px; }
  .wifi { width: 26px; height: 24px; margin-right: 12px; }
  .vol { width: 27px; height: 22px; margin-right: 6px; }
  .cpu { width: 50px; height: 32px; margin-right: 9px; border: 1px solid #555; background: #d2d2d2; display: grid; }
  .cpu svg { grid-area: 1/1; align-self: end; width: 48px; height: 12px; }
  .cpu span { grid-area: 1/1; align-self: center; font: 400 12px/14px "DejaVu Sans Mono", monospace; color: #111; margin: 3px 0 0 18px; letter-spacing: -.3px; }
  .clock { width: 60px; font-size: 17px; letter-spacing: -.6px; }
  .eject { width: 16px; height: 18px; }

  .titlebar { height: 28px; flex: none; background: #4c98f5; color: #fff; display: grid; grid-template-columns: 62px 1fr 62px; align-items: center; text-align: center; }
  .titlebar span { grid-column: 2; padding-top: 1px; }
  .titlebar svg { width: 58px; height: 12px; margin-left: -4px; }

  .menubar { height: 33px; flex: none; display: flex; align-items: center; padding: 2px 0 0 10px; }
  .menubar span { white-space: nowrap; }
  .menubar u { text-underline-offset: 3px; text-decoration-thickness: 1px; text-decoration-skip-ink: none; }

  .toolbar { height: 37px; flex: none; display: flex; align-items: center; border-top: 1px solid #fff; border-bottom: 1px solid #a3a3a3; }
  .grip { display: flex; justify-content: center; flex: none; }
  .grip i { width: 2px; height: 24px; background: repeating-linear-gradient(#b9b9b9 0 2px, transparent 2px 4.400px); }
  .vsep { width: 8px; flex: none; display: flex; justify-content: center; }
  .vsep::before { content: ''; width: 1px; height: 21px; background: #b1b1b1; }
  .tool { width: 35px; height: 35px; flex: none; display: flex; align-items: center; justify-content: center; }
  .tool svg { margin-bottom: 1px; }
  .tool.frame { width: 38px; }
  .tool.distribute { width: 33px; }
  .pressed { margin: 0 1px; width: 33px; border: 1px solid #b5b5b5; border-radius: 4px; background: #e3e3e3; }
  .i26 { width: 26px; height: 26px; }
  .drop { width: 17px; flex: none; display: flex; justify-content: center; padding: 0 1px 2px 0; }
  .drop.wide { width: 20px; padding-right: 0; }
  .dd { width: 5px; height: 3px; fill: #000; }
  .dd.dim { fill: #a9a9a9; }

  main { flex: 1; min-height: 0; display: flex; border-top: 1px solid #a3a3a3; }
  .slides { width: 233px; flex: none; display: flex; flex-direction: column; padding: 0 5px 3px 2px; border-bottom: 1px solid #aaa; }
  b { font-weight: 700; letter-spacing: -.2px; color: #2e3133; }
  .phead { height: 34px; flex: none; display: flex; align-items: center; justify-content: space-between; padding: 3px 3px 0 1px; }
  .phead svg, .ptitle svg { width: 9px; height: 9px; stroke: #3c3c3c; stroke-width: 2.200; }
  .phead svg { margin-top: -4px; }
  .list { flex: 1; background: #fff; border: 1px solid #a6a6a6; border-right: 0; border-bottom: 0; padding: 8px 0 0 8px; }
  .sel { width: 208px; height: 143px; display: flex; border: 1px solid #5b7795; background: linear-gradient(#8eaacf, #8eaacf 25%, #a1bde2 75%); padding: 4px; }
  .sel b { width: 20px; text-align: right; padding-right: 4px; margin-top: -2px; font-size: 17px; color: #4c5260; }
  .thumb { width: 180px; height: 135px; margin-top: -1px; background: #fff; border: 1px solid #8d8d8d; box-shadow: 0 1px 3px #555; font: 9.800px/10px "Liberation Sans", Arial, sans-serif; text-align: center; padding: 12px 0 0 0; color: #222; }

  .split { width: 7px; flex: none; border: 1px solid #aaa; border-width: 0 1px; background: linear-gradient(90deg, #ececec 2px, #fafafa 4px, #ececec); display: flex; align-items: center; justify-content: center; }
  .split div { width: 7px; height: 73px; flex: none; background: #888; margin-top: -1px; display: flex; align-items: center; justify-content: center; }
  .split svg { width: 4px; height: 8px; fill: #e8e8e8; }

  .work { flex: 1; display: grid; grid-template-columns: 1fr 13px; grid-template-rows: 1fr 13px; min-width: 0; }
  .canvas { padding: 10px 0 0 95px; overflow: hidden; min-width: 0; }
  .slide { position: relative; width: 996px; height: 747px; background: #fff; border: 1px solid #8c8c8c; box-shadow: 0 2px 6px #777; font-family: "Liberation Sans", Arial, sans-serif; color: #000; font-weight: 400; }
  .title { position: absolute; left: 49px; top: 29px; width: 895px; height: 124px; display: flex; align-items: center; justify-content: center; font-size: 55px; line-height: 60px; outline: 3px solid #cbddf6; box-shadow: inset 0 0 0 3px #cbddf6; }
  .title span { letter-spacing: .3px; margin-left: 1px; }
  .h { position: absolute; width: 9px; height: 9px; margin: -4px 0 0 -4.500px; background: #2ef5f5; border: 1px solid #000; border-radius: 1px; }
  .h.big { width: 13px; height: 13px; margin: -6px 0 0 -6px; box-shadow: inset 0 0 0 1px #2ef5f5, inset 0 0 0 2px #000; }
  .outline { position: absolute; left: 49px; top: 174px; width: 896px; height: 433px; display: grid; place-items: center; font-size: 40px; }
  .outline svg { grid-area: 1/1; width: 100%; height: 100%; }
  .outline span { grid-area: 1/1; letter-spacing: .1px; margin: -2px 0 0 -1px; }
  .vscroll, .hscroll { background: #d4d4d4; display: flex; }
  .vscroll { flex-direction: column; }
  .track { flex: 1; display: flex; }
  .track i { background: #9c9c9c; border-radius: 4px; flex: none; }
  .vscroll .track i { width: 7px; height: 382px; margin: 182px 0 0 3px; }
  .hscroll .track i { height: 7px; width: 460px; margin: 3px 0 0 354px; }
  .sb { width: 13px; height: 13px; border: 1px solid #aaa; border-radius: 2px; background: #f8f8f8; fill: none; stroke: #333; stroke-width: 1.400; }

  .props { width: 327px; margin: 3px 0 4px 4px; border: 1px solid #dadada; display: flex; flex-direction: column; flex: none; }
  .ptitle { height: 26px; flex: none; display: flex; align-items: center; justify-content: space-between; padding: 3px 4px 0 10px; }
  .ptitle svg { margin-top: 3px; }
  .sec { height: 27px; flex: none; display: flex; align-items: center; padding: 2px 5px 0; background: linear-gradient(#dcdcdc, #ececec); }
  .sec b { flex: 1; margin-left: 5px; padding-top: 3px; }
  .box { width: 9px; height: 9px; margin-top: -3px; }
  .more { width: 11px; height: 10px; margin-top: 3px; }
  .fonts { height: 38px; flex: none; display: flex; padding: 7px 0 0 7px; }
  .field { height: 31px; background: #fff; border: 1px solid #989898; border-radius: 4px; padding: 6px 0 0 4px; white-space: nowrap; letter-spacing: .05px; }
  .name { width: 217px; }
  .size { width: 40px; margin-left: 8px; }
  .cb { width: 21px; height: 31px; margin-left: 2px; border: 1px solid #aaa; border-radius: 4px; background: linear-gradient(#f8f8f8, #dedede); display: flex; align-items: center; justify-content: center; }
  .cb svg { width: 8px; height: 5px; fill: none; stroke: #444; stroke-width: 1.400; }
  .row { display: flex; align-items: center; flex: none; padding: 0 8px 0 5px; }
  .sg { width: 25px; height: 25px; display: flex; align-items: center; justify-content: center; flex: none; }
  .sg svg { width: 16px; height: 16px; }
  .sg.on { width: 23px; margin: 0 1px; border: 1px solid #b0b0b0; border-radius: 4px; background: #e4e4e4; }
  .pd { width: 17px; display: flex; justify-content: center; }
  .pd.b { width: 18px; }
  .sp { flex: 1; }
  .gap-mark { width: 10px; }
  .gap-kern { width: 11px; }
  .r1 { height: 58px; }
  .r2 { height: 39px; padding: 0 8px 7px 4px; }
  .r3 { height: 44px; }
  .r4 { height: 34px; padding-left: 4px; }
  .cols { display: grid; grid-template-columns: 159px 1fr; flex: none; padding-left: 6px; }
  .cols > span { display: flex; align-items: center; }
  .lab { height: 36px; }
  .ric { height: 27px; padding-left: 5px; margin-bottom: 7px; }
  .fld { height: 39px; }
  .fld > span { padding-bottom: 2px; }
  .fld.last { margin-bottom: 2px; }
  .fld .sg { width: 16px; margin-right: 7px; }
  .ls .sg { margin: 0 13px 0 2px; }
  .spin { width: 128px; height: 31px; background: #fff; border: 1px solid #999; border-radius: 4px; display: flex; overflow: hidden; }
  .spin > span { flex: 1; padding: 6px 0 0 1px; }
  .ud { width: 18px; border-left: 1px solid #999; background: linear-gradient(#f6f6f6, #dfdfdf); display: flex; flex-direction: column; }
  .ud i { flex: 1; display: flex; align-items: center; justify-content: center; margin: 0 2px; }
  .ud i:first-child { border-bottom: 1px solid #999; }
  .ud svg { width: 10px; height: 6px; fill: none; stroke: #444; stroke-width: 1.200; }
  .rest { border-top: 1px solid #dadada; flex: 1; }

  .tabs { flex: 0 0 40px; display: flex; flex-direction: column; align-items: center; padding: 15px 1px 0 0; }
  .tmenu { width: 10px; height: 9px; margin-left: 1px; }
  .tabs hr { width: 23px; height: 1px; border: 0; background: #d5d5d5; margin: 14px 0 3px; flex: none; }
  .tab { width: 31px; height: 31px; margin-bottom: 4.200px; display: flex; align-items: center; justify-content: center; flex: none; }
  .tab.current { border: 1px solid #b5b5b5; border-radius: 4px; background: #e5e5e5; }

  footer { height: 26px; flex: none; display: flex; font-size: 13px; line-height: 22px; border-top: 1px solid #a6a6a6; padding: 2px 0; white-space: nowrap; letter-spacing: -.05px; }
  footer > div { border-left: 1px solid #222; padding-top: 1px; }
  footer .s1 { width: 620px; border: 0; padding-left: 11px; }
  .s2 { width: 414px; display: flex; padding-left: 10px; }
  .s2 svg { width: 14px; height: 13px; margin-right: 6px; }
  .s2 .pos { width: 183px; }
  .s3 { width: 23px; padding-left: 7px; }
  .s3 svg { width: 12px; height: 12px; margin-top: 4px; }
  .s4 { width: 30px; }
  .s5 { width: 76px; padding-left: 9px; }
  .s6 { width: 442px; padding-left: 9px; }
  .s7 { width: 23px; padding-left: 6px; }
  .s7 svg { width: 12px; height: 12px; margin-top: 4px; }
  .s8 { width: 144px; padding-left: 10px; }
  .s8 svg { width: 126px; height: 12px; margin-top: 4px; }
  .s9 { padding-left: 12px; }
</style>
